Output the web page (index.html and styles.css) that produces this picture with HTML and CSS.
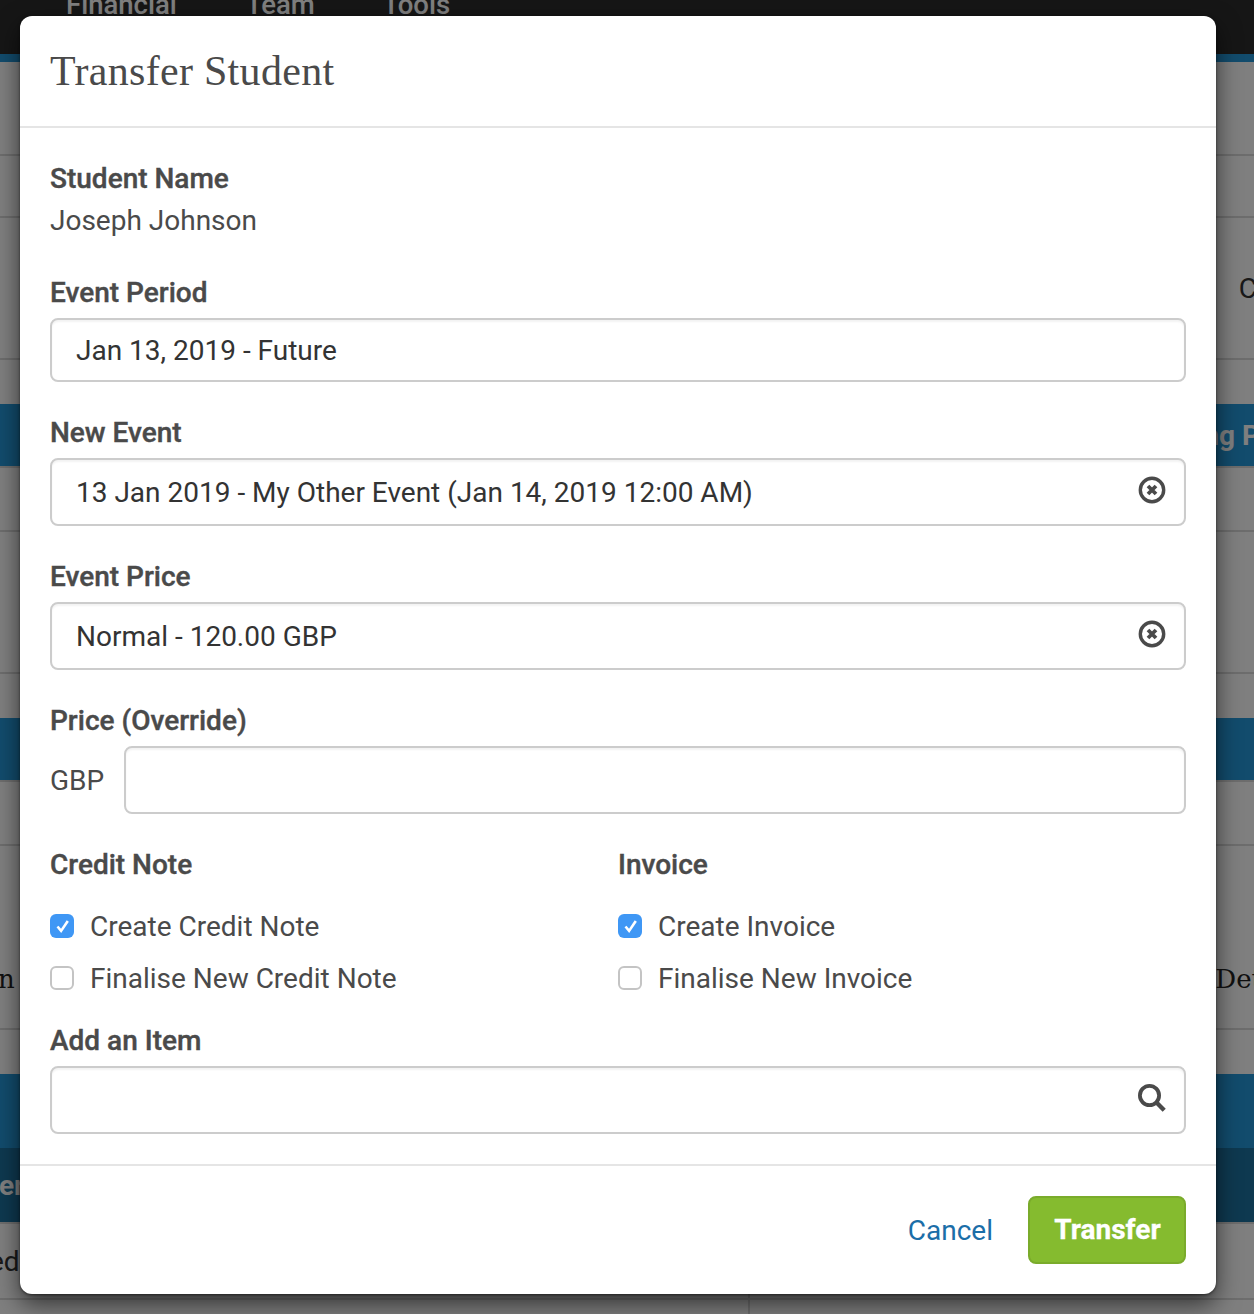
FILE: index.html
```html
<!DOCTYPE html>
<html lang="en">
<head>
<meta charset="utf-8">
<title>Transfer Student</title>
<link rel="stylesheet" href="styles.css">
</head>
<body>
<div class="page">
  <nav class="nav">
    <span class="nav-a">Financial</span>
    <span class="nav-b">Team</span>
    <span class="nav-c">Tools</span>
  </nav>
  <div class="strip"></div>
  <div class="row h94"></div>
  <div class="row h62"></div>
  <div class="row h142 end"><span class="c-right">C</span></div>
  <div class="plain h44"></div>
  <div class="band h64"><span class="band-text">ng P</span></div>
  <div class="row h64"></div>
  <div class="row h142"></div>
  <div class="plain h44"></div>
  <div class="band h64"></div>
  <div class="row h64"></div>
  <div class="row h184 between"><span class="slab n-left">n</span><span class="slab c-det">Det</span></div>
  <div class="plain h44"></div>
  <div class="band flat h74"></div>
  <div class="band dark h76"><span class="band-left">er</span></div>
  <div class="row h76 split"><span class="ed">ed</span></div>
  <div class="tail"></div>
</div>
<div class="overlay"></div>
<div class="layer">
  <section class="modal">
    <header class="modal-head"><h1 class="title">Transfer Student</h1></header>
    <div class="modal-body">
      <div class="group-tight">
        <div class="label tight">Student Name</div>
        <div class="value">Joseph Johnson</div>
      </div>
      <div class="group">
        <div class="label">Event Period</div>
        <div class="field short"><span>Jan 13, 2019 - Future</span></div>
      </div>
      <div class="group">
        <div class="label">New Event</div>
        <div class="field">
          <span>13 Jan 2019 - My Other Event (Jan 14, 2019 12:00 AM)</span>
          <svg class="icon" viewBox="0 0 28 28"><circle cx="14" cy="14" r="11.7" fill="none" stroke="#4a4a4a" stroke-width="3.4"/><path d="M10 10l8 8M18 10l-8 8" stroke="#4a4a4a" stroke-width="3.8" fill="none"/></svg>
        </div>
      </div>
      <div class="group">
        <div class="label">Event Price</div>
        <div class="field">
          <span>Normal - 120.00 GBP</span>
          <svg class="icon" viewBox="0 0 28 28"><circle cx="14" cy="14" r="11.7" fill="none" stroke="#4a4a4a" stroke-width="3.4"/><path d="M10 10l8 8M18 10l-8 8" stroke="#4a4a4a" stroke-width="3.8" fill="none"/></svg>
        </div>
      </div>
      <div class="group">
        <div class="label">Price (Override)</div>
        <div class="price-row">
          <span class="addon">GBP</span>
          <div class="field grow"></div>
        </div>
      </div>
      <div class="checks">
        <div class="check-col">
          <div class="label check-label">Credit Note</div>
          <div class="check-row"><span class="box on"><svg viewBox="0 0 24 24"><path d="M7.5 12.5l3.6 4.4L17.8 7" fill="none" stroke="#fff" stroke-width="2.6"/></svg></span>Create Credit Note</div>
          <div class="check-row"><span class="box"></span>Finalise New Credit Note</div>
        </div>
        <div class="check-col">
          <div class="label check-label">Invoice</div>
          <div class="check-row"><span class="box on"><svg viewBox="0 0 24 24"><path d="M7.5 12.5l3.6 4.4L17.8 7" fill="none" stroke="#fff" stroke-width="2.6"/></svg></span>Create Invoice</div>
          <div class="check-row"><span class="box"></span>Finalise New Invoice</div>
        </div>
      </div>
      <div class="group last">
        <div class="label">Add an Item</div>
        <div class="field">
          <span></span>
          <svg class="icon" viewBox="0 0 28 28"><circle cx="11.5" cy="11.5" r="9.6" fill="none" stroke="#4a4a4a" stroke-width="3.8"/><path d="M18 18l8.2 8.2" stroke="#4a4a4a" stroke-width="4.4" fill="none"/></svg>
        </div>
      </div>
    </div>
    <footer class="modal-foot">
      <a class="cancel">Cancel</a>
      <button class="primary">Transfer</button>
    </footer>
  </section>
</div>
</body>
</html>
```
FILE: styles.css
```css
* { box-sizing: border-box; }
html, body { margin: 0; padding: 0; }
body { width: 1254px; height: 1314px; overflow: hidden; background: #fff; font-family: Roboto, sans-serif; color: #4a4a4a; position: relative; }

.page { width: 1254px; height: 1314px; overflow: hidden; background: #fff; }
.nav { height: 54px; background: #2c2c2c; display: flex; align-items: flex-start; overflow: hidden; font-size: 27.5px; font-weight: 500; color: #fff; line-height: 40px; }
.nav span { margin-top: -15px; }
.nav-a { margin-left: 66px; }
.nav-b { margin-left: 69px; }
.nav-c { margin-left: 68px; }
.strip { height: 8px; background: #2598da; }
.row { border-bottom: 2px solid #dbdbdb; display: flex; align-items: center; font-size: 28px; color: #333; }
.plain { background: #fff; }
.band { background: #2598da; color: #fff; font-size: 28px; font-weight: 700; display: flex; align-items: center; border-bottom: 2px solid #dbdbdb; }
.band.flat { border-bottom: 0; }
.band.dark { background: #1c72a0; }
.h94 { height: 94px; }
.h62 { height: 62px; }
.h142 { height: 142px; }
.h44 { height: 44px; }
.h64 { height: 64px; }
.h184 { height: 184px; }
.h74 { height: 74px; }
.h76 { height: 76px; }
.end { justify-content: flex-end; }
.c-right { margin-right: -3px; }
.band-text { margin-left: auto; margin-right: -6px; }
.between { justify-content: space-between; padding-top: 84px; }
.slab { font-family: "DejaVu Serif", serif; color: #222; }
.n-left { margin-left: -2px; font-size: 26px; }
.c-det { margin-right: -8px; font-size: 26px; }
.band-left { margin-left: -1px; }
.ed { margin-left: -11px; }
.split { background: #fff; }
.split, .tail { background-image: linear-gradient(#dbdbdb, #dbdbdb); background-size: 2px 100%; background-position: 748px 0; background-repeat: no-repeat; }
.tail { height: 14px; }

.overlay { position: absolute; inset: 0; background: rgba(0,0,0,.5); }
.layer { position: absolute; inset: 0; padding: 16px 38px 0 20px; }
.modal { width: 1196px; height: 1278px; background: #fff; border-radius: 12px; box-shadow: 0 10px 25px rgba(0,0,0,.6), 0 1px 3px rgba(0,0,0,.5); display: flex; flex-direction: column; }
.modal-head { height: 112px; border-bottom: 2px solid #e5e5e5; padding: 0 30px; display: flex; align-items: center; }
.title { margin: 0; font-family: "Liberation Serif", serif; font-weight: 400; font-size: 42px; letter-spacing: .3px; line-height: 40px; color: #4a4a4a; }
.modal-body { padding: 30px; flex: 1; border-bottom: 2px solid #e5e5e5; }
.label { font-size: 28px; font-weight: 500; height: 40px; padding-top: 2px; line-height: 38px; margin-bottom: 6px; color: #4a4a4a; -webkit-text-stroke: .4px #4a4a4a; }
.label.tight { margin-bottom: 2px; }
.value { font-size: 28px; height: 40px; padding-top: 2px; line-height: 38px; }
.group-tight { margin-bottom: 32px; }
.group { margin-bottom: 30px; }
.group.last { margin-bottom: 0; }
.field { height: 68px; border: 2px solid #ccc; border-radius: 8px; box-shadow: inset 0 2px 2px rgba(10,10,10,.05); display: flex; align-items: center; justify-content: space-between; padding: 0 18px 0 24px; font-size: 28px; color: #333; background: #fff; }
.field.short { height: 64px; }
.field.grow { flex: 1; }
.icon { width: 28px; height: 28px; flex: none; margin-bottom: 4px; }
.price-row { display: flex; align-items: center; }
.addon { width: 74px; font-size: 28px; height: 40px; padding-top: 2px; line-height: 38px; flex: none; }
.checks { display: grid; grid-template-columns: 568px 1fr; margin-bottom: 22px; }
.check-label { margin-bottom: 22px; }
.check-row { display: flex; align-items: center; height: 40px; font-size: 28px; margin-bottom: 12px; }
.check-row:last-child { margin-bottom: 0; }
.box { width: 24px; height: 24px; border: 2px solid #c4c4c4; border-radius: 6px; margin-right: 16px; flex: none; background: #fff; display: block; }
.box.on { background: #3f97f5; border: 0; }
.box svg { width: 24px; height: 24px; display: block; }
.modal-foot { height: 128px; flex: none; padding: 30px; display: flex; justify-content: flex-end; align-items: center; gap: 35px; }
.cancel { font-size: 28px; color: #1b6ea8; }
.primary { width: 158px; height: 68px; background: #85bb2f; border: 2px solid #7aab2b; border-radius: 8px; color: #fff; font-family: Roboto, sans-serif; font-size: 28px; font-weight: 700; padding: 0 0 2px 1px; -webkit-text-stroke: .3px #fff; }
```
